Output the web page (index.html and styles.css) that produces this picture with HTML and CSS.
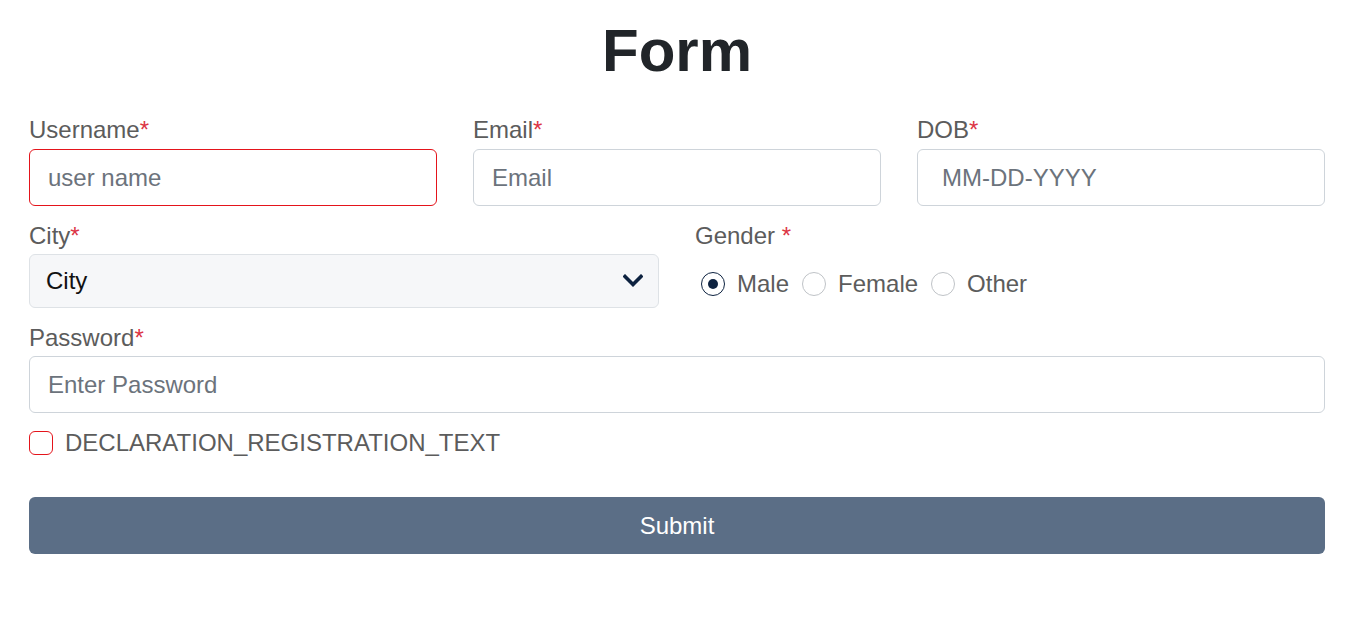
FILE: index.html
```html
<!DOCTYPE html>
<html lang="en">
<head>
<meta charset="utf-8">
<title>Form</title>
<link rel="stylesheet" href="styles.css">
</head>
<body>
<main class="page">
  <h1 class="title">Form</h1>
  <form class="form">
    <div class="row row-3">
      <div class="field">
        <label class="label" for="username">Username<span class="req">*</span></label>
        <input class="control control-error" id="username" type="text" placeholder="user name">
      </div>
      <div class="field">
        <label class="label" for="email">Email<span class="req">*</span></label>
        <input class="control" id="email" type="text" placeholder="Email">
      </div>
      <div class="field">
        <label class="label" for="dob">DOB<span class="req">*</span></label>
        <input class="control control-date" id="dob" type="text" placeholder="MM-DD-YYYY">
      </div>
    </div>
    <div class="row row-2">
      <div class="field">
        <label class="label label-city">City<span class="req">*</span></label>
        <div class="select">
          <span class="select-text">City</span>
          <svg class="chevron" width="20" height="14" viewBox="0 0 20 14"><path d="M2 2.5 L10 10.5 L18 2.5" fill="none" stroke="#0d2240" stroke-width="3.6" stroke-linecap="square"/></svg>
        </div>
      </div>
      <div class="field">
        <span class="label label-gender">Gender <span class="req">*</span></span>
        <div class="radios">
          <span class="radio-item"><span class="radio radio-on"></span><span class="radio-text">Male</span></span>
          <span class="radio-item"><span class="radio"></span><span class="radio-text">Female</span></span>
          <span class="radio-item"><span class="radio"></span><span class="radio-text">Other</span></span>
        </div>
      </div>
    </div>
    <div class="field field-password">
      <label class="label label-password" for="password">Password<span class="req">*</span></label>
      <input class="control" id="password" type="password" placeholder="Enter Password">
    </div>
    <div class="check">
      <span class="checkbox"></span>
      <span class="check-text">DECLARATION_REGISTRATION_TEXT</span>
    </div>
    <button class="submit" type="button">Submit</button>
  </form>
</main>
</body>
</html>
```

FILE: styles.css
```css
* { box-sizing: border-box; }

html, body {
  margin: 0;
  background: #ffffff;
}

body {
  font-family: "Liberation Sans", Arial, sans-serif;
  color: #5c5c5c;
}

.page {
  width: 1296px;
  margin-left: 29px;
  padding-top: 15px;
}

.title {
  margin: 0;
  font-size: 60px;
  line-height: 72px;
  font-weight: 700;
  color: #212529;
  text-align: center;
}

.form {
  display: flex;
  flex-direction: column;
}

.row {
  display: grid;
  column-gap: 36px;
}

.row-3 {
  grid-template-columns: repeat(3, 1fr);
  margin-top: 25px;
}

.row-2 {
  grid-template-columns: 1fr 1fr;
  margin-top: 12px;
}

.field {
  display: flex;
  flex-direction: column;
}

.label {
  display: block;
  font-size: 24px;
  line-height: 36px;
  color: #5c5c5c;
  margin-bottom: 1px;
}

.label-city,
.label-gender,
.label-password { margin-bottom: 0; }

.req { color: #dc3545; }

.control {
  height: 57px;
  width: 100%;
  padding: 0 18px;
  font-family: "Liberation Sans", Arial, sans-serif;
  font-size: 24px;
  color: #212529;
  border: 1px solid #ced4da;
  border-radius: 6px;
  background: #ffffff;
  outline: none;
}

.control::placeholder { color: #6c737c; opacity: 1; }

.control-error { border-color: #e4141b; }

.control-date { padding-left: 24px; }

.select {
  height: 54px;
  display: flex;
  align-items: center;
  justify-content: space-between;
  padding: 0 15px 0 16px;
  background: #f6f7f9;
  border: 1px solid #dee2e6;
  border-radius: 6px;
}

.select-text {
  font-size: 24px;
  color: #111111;
}

.chevron { display: block; }

.radios {
  display: flex;
  align-items: center;
  height: 54px;
  padding: 6px 0 0 6px;
}

.radio-item {
  display: flex;
  align-items: center;
  margin-right: 13px;
}

.radio {
  width: 24px;
  height: 24px;
  border-radius: 50%;
  border: 1px solid #bfc3c7;
  background: #ffffff;
  display: flex;
  align-items: center;
  justify-content: center;
}

.radio-on {
  border: 1.5px solid #0d2240;
}

.radio-on::after {
  content: "";
  width: 10px;
  height: 10px;
  border-radius: 50%;
  background: #0d2240;
}

.radio-text {
  margin-left: 12px;
  font-size: 24px;
  color: #5c5c5c;
}

.field-password { margin-top: 12px; }

.check {
  display: flex;
  align-items: center;
  margin-top: 17px;
  height: 26px;
}

.checkbox {
  width: 24px;
  height: 24px;
  border: 1px solid #e4141b;
  border-radius: 6px;
  background: #ffffff;
}

.check-text {
  margin-left: 12px;
  font-size: 24px;
  color: #5c5c5c;
}

.submit {
  margin-top: 41px;
  height: 57px;
  width: 100%;
  border: none;
  border-radius: 6px;
  background: #5b6e86;
  color: #ffffff;
  font-family: "Liberation Sans", Arial, sans-serif;
  font-size: 24px;
}
```
